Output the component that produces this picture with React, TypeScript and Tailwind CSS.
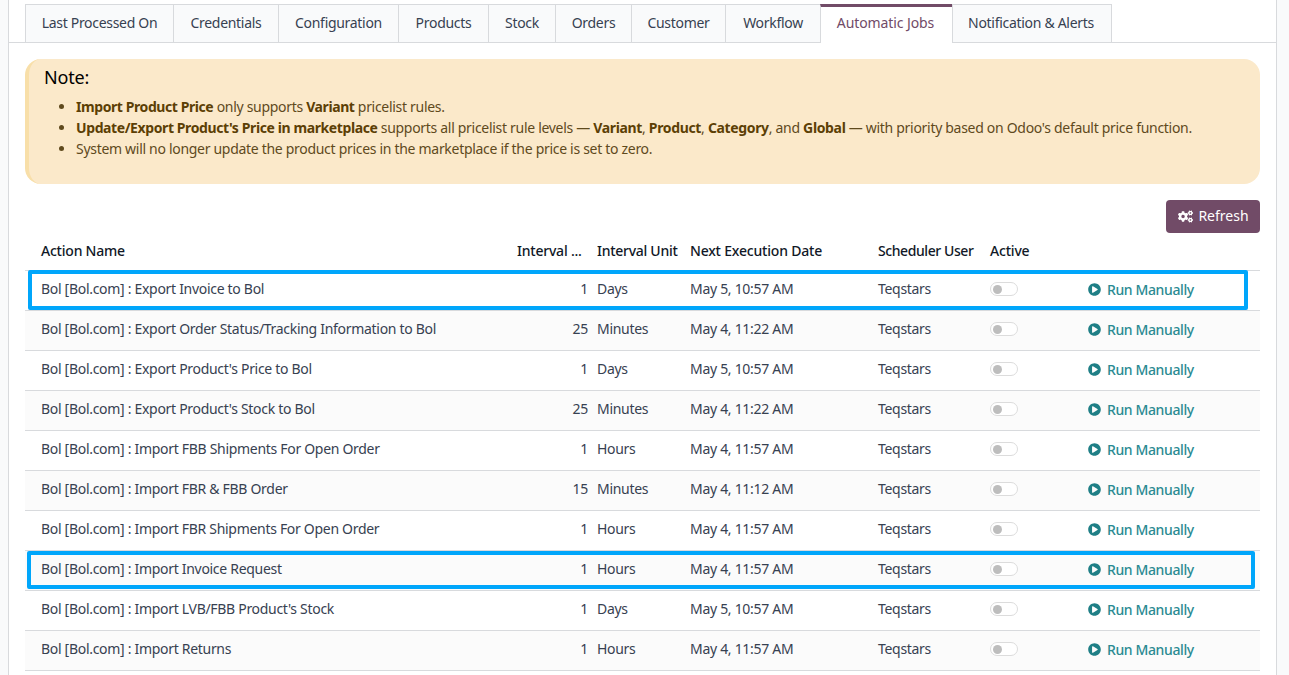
import { FaCogs, FaPlayCircle } from "react-icons/fa";

const TABS = [
  { label: "Last Processed On", width: "w-[149px]" },
  { label: "Credentials", width: "w-[106px]" },
  { label: "Configuration", width: "w-[121px]" },
  { label: "Products", width: "w-[91px]" },
  { label: "Stock", width: "w-[68px]" },
  { label: "Orders", width: "w-[77px]" },
  { label: "Customer", width: "w-[95px]" },
  { label: "Workflow", width: "w-[96px]" },
  { label: "Automatic Jobs", width: "w-[133px]", active: true },
  { label: "Notification & Alerts", width: "w-[160px] pr-[2px]" },
];

const JOBS = [
  { name: "Export Invoice to Bol", interval: 1, unit: "Days", next: "May 5, 10:57 AM" },
  { name: "Export Order Status/Tracking Information to Bol", interval: 25, unit: "Minutes", next: "May 4, 11:22 AM" },
  { name: "Export Product's Price to Bol", interval: 1, unit: "Days", next: "May 5, 10:57 AM" },
  { name: "Export Product's Stock to Bol", interval: 25, unit: "Minutes", next: "May 4, 11:22 AM" },
  { name: "Import FBB Shipments For Open Order", interval: 1, unit: "Hours", next: "May 4, 11:57 AM" },
  { name: "Import FBR & FBB Order", interval: 15, unit: "Minutes", next: "May 4, 11:12 AM" },
  { name: "Import FBR Shipments For Open Order", interval: 1, unit: "Hours", next: "May 4, 11:57 AM" },
  { name: "Import Invoice Request", interval: 1, unit: "Hours", next: "May 4, 11:57 AM" },
  { name: "Import LVB/FBB Product's Stock", interval: 1, unit: "Days", next: "May 5, 10:57 AM" },
  { name: "Import Returns", interval: 1, unit: "Hours", next: "May 4, 11:57 AM" },
];

function Toggle() {
  return (
    <div className="flex h-[14px] w-[28px] items-center rounded-full border border-[#dcdcdc] bg-white pl-[2px]">
      <div className="h-[9px] w-[9px] rounded-full bg-[#bdbdbd]" />
    </div>
  );
}

export default function App() {
  return (
    <div className="flex h-[675px] overflow-hidden bg-[#f9fafb] font-['Noto_Sans',sans-serif] text-[14px] tracking-[-0.3px] text-[#374151]">
      <div className="ml-[8px] mr-[12px] flex-1 border-x border-[#d8dadd] bg-white">
        <div className="mt-[4px] flex h-[39px] border-b border-[#d8dadd] pl-[17px]">
          {TABS.map((tab) => (
            <div
              key={tab.label}
              className={
                tab.active
                  ? `${tab.width} -ml-px -mb-px flex h-[39px] items-center justify-center border-x border-t-[3px] border-x-[#d8dadd] border-t-[#714b67] bg-white pb-[6px] pr-[2px] tracking-[-0.1px] text-[#714b67]`
                  : `${tab.width} -ml-px flex h-[38px] items-center justify-center border border-b-0 border-[#d8dadd] bg-[#f9fafb] pb-[2px] text-[#374151]`
              }
            >
              {tab.label}
            </div>
          ))}
        </div>

        <div className="px-[16px] pt-[16px]">
          <div className="h-[125px] rounded-[16px] border-l-[4px] border-[#f8dfa9] bg-[#fbe9ca] pl-[15px] pt-[5px] text-[#5f4a1d]">
            <h5 className="text-[18px] leading-[27px] tracking-[-0.15px] text-black">Note:</h5>
            <ul className="mt-[5px] list-disc pl-[32px] text-[14px] leading-[21px] tracking-[-0.3px] marker:text-[#5f4a1d]">
              <li>
                <b className="font-bold tracking-[-0.42px] text-[#5c3f05]">Import Product Price</b> only supports{" "}
                <b className="font-bold tracking-[-0.42px] text-[#5c3f05]">Variant</b> pricelist rules.
              </li>
              <li>
                <b className="font-bold tracking-[-0.4px] text-[#5c3f05]">Update/Export Product's Price in marketplace</b> supports all
                pricelist rule levels — <b className="font-bold tracking-[-0.35px] text-[#5c3f05]">Variant</b>,{" "}
                <b className="font-bold tracking-[-0.35px] text-[#5c3f05]">Product</b>,{" "}
                <b className="font-bold tracking-[-0.35px] text-[#5c3f05]">Category</b>, and{" "}
                <b className="font-bold tracking-[-0.35px] text-[#5c3f05]">Global</b> — with priority based on Odoo's default price function.
              </li>
              <li>System will no longer update the product prices in the marketplace if the price is set to zero.</li>
            </ul>
          </div>

          <div className="mt-[16px] flex justify-end">
            <button className="flex h-[33px] w-[94px] items-center justify-center gap-[5px] rounded-[4px] bg-[#714b67] pb-[2px] pl-[1px] tracking-normal text-white">
              <FaCogs className="mt-[2px] h-[15px] w-[15px]" />
              Refresh
            </button>
          </div>

          <div className="relative mt-[2px]">
            <table className="w-[1235px] table-fixed border-collapse">
              <thead>
                <tr className="h-[35px] border-b border-[#d8dadd] text-left text-[#111827]">
                  <th className="w-[484px] pb-[4px] pl-[16px] font-medium tracking-[-0.22px]">Action Name</th>
                  <th className="w-[80px] pb-[4px] pl-[8px] pr-[4px] font-medium tracking-[-0.22px]">
                    <div>Interval ...</div>
                  </th>
                  <th className="w-[93px] pb-[4px] pl-[8px] font-medium tracking-[-0.28px]">Interval Unit</th>
                  <th className="w-[188px] pb-[4px] pl-[8px] font-medium tracking-[-0.2px]">Next Execution Date</th>
                  <th className="w-[112px] pb-[4px] pl-[8px] font-medium tracking-[-0.42px]">Scheduler User</th>
                  <th className="w-[98px] pb-[4px] pl-[8px] font-medium tracking-[-0.2px]">Active</th>
                  <th />
                </tr>
              </thead>
              <tbody>
                {JOBS.map((job, i) => (
                  <tr key={job.name} className={`h-[40px] border-b border-[#d8dadd] ${i % 2 ? "bg-[#fbfbfb]" : "bg-white"}`}>
                    <td className="pb-[4px] pl-[16px]">Bol [Bol.com] : {job.name}</td>
                    <td className="pb-[4px] pr-[1px] text-right">{job.interval}</td>
                    <td className="pb-[4px] pl-[8px]">{job.unit}</td>
                    <td className="pb-[4px] pl-[8px]">{job.next}</td>
                    <td className="pb-[4px] pl-[8px]">Teqstars</td>
                    <td className="pb-[2px] pl-[8px]">
                      <Toggle />
                    </td>
                    <td className="pb-[2px] pl-[8px]">
                      <div className="flex items-center gap-[6px] font-medium tracking-[-0.38px] text-[#2a8a92]">
                        <FaPlayCircle className="mt-[1px] h-[13px] w-[13px] text-[#1f7f86]" />
                        Run Manually
                      </div>
                    </td>
                  </tr>
                ))}
              </tbody>
            </table>
            {/* highlight boxes drawn over the rows */}
            <div className="absolute left-[3px] top-[35px] h-[40px] w-[1220px] rounded-[2px] border-[4px] border-[#00a6fb]" />
            <div className="absolute left-[2px] top-[316px] h-[38px] w-[1228px] rounded-[2px] border-[4px] border-[#00a6fb]" />
          </div>
        </div>
      </div>
    </div>
  );
}
